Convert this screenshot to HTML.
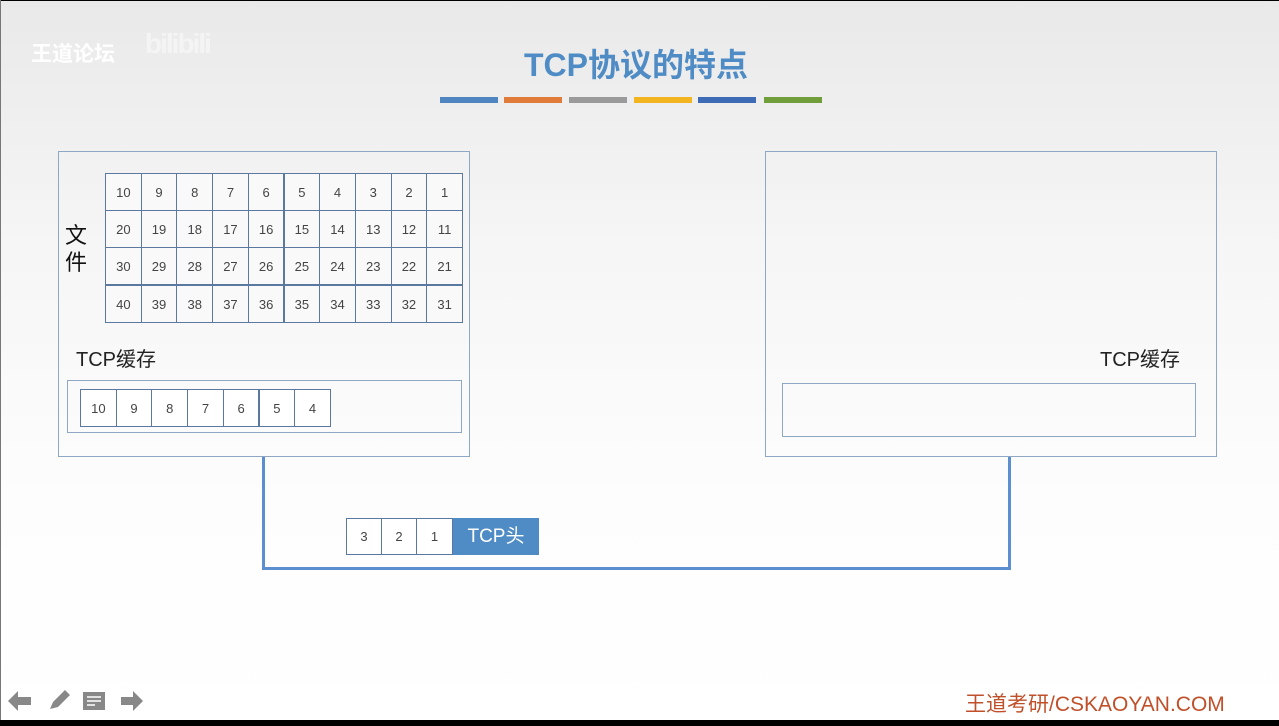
<html><head><style>
body{margin:0;width:1279px;height:726px;position:relative;overflow:hidden;background:linear-gradient(#e9e9e9,#f6f6f6 250px,#fdfdfd 500px,#fff);font-family:"Liberation Sans","Noto Sans CJK SC",sans-serif}
.a{position:absolute}
.c{position:absolute;border:1px solid #5a78a0;box-sizing:border-box;background:#f9f9f9;font-size:13px;color:#444;display:flex;align-items:center;justify-content:center}
.box{position:absolute;border:1px solid #8fa6c4;box-sizing:border-box}
.bar{position:absolute;top:97px;height:6px;width:58px}
</style></head><body>
<div class="a" style="left:0;top:0;width:1279px;height:1px;background:#000"></div>
<div class="a" style="left:0;top:0;width:1px;height:726px;background:#777"></div>
<div class="a" style="left:0;top:720px;width:1279px;height:6px;background:#000"></div>
<div class="a" style="left:31px;top:38px;font-size:21px;color:#fff;font-weight:bold">王道论坛</div>
<div class="a" style="left:145px;top:28px;font-size:28px;color:#f4f4f4;font-weight:bold;letter-spacing:-2px">bilibili</div>
<div class="a" style="left:0;width:1272px;top:40px;text-align:center;font-size:32px;font-weight:bold;color:#4f8cc6">TCP协议的特点</div>
<div class="bar" style="left:440px;background:#4f86c0"></div>
<div class="bar" style="left:504px;background:#e07b39"></div>
<div class="bar" style="left:569px;background:#9a9a9a"></div>
<div class="bar" style="left:634px;background:#f2b520"></div>
<div class="bar" style="left:698px;background:#3d6bb5"></div>
<div class="bar" style="left:764px;background:#6f9e3a"></div>
<div class="box" style="left:58px;top:151px;width:412px;height:306px"></div>
<div class="box" style="left:765px;top:151px;width:452px;height:306px"></div>
<div class="a" style="left:65px;top:222px;font-size:22px;line-height:27px;width:24px;color:#111">文件</div>
<div id="g"></div>
<div class="a" style="left:76px;top:343px;font-size:20px;color:#222">TCP缓存</div>
<div class="a" style="left:1100px;top:343px;font-size:20px;color:#222">TCP缓存</div>
<div class="box" style="left:67px;top:380px;width:395px;height:53px"></div>
<div class="box" style="left:782px;top:383px;width:414px;height:54px"></div>
<div class="a" style="left:262px;top:457px;width:3px;height:113px;background:#5b8fd0"></div>
<div class="a" style="left:1008px;top:457px;width:3px;height:113px;background:#5b8fd0"></div>
<div class="a" style="left:262px;top:567px;width:749px;height:3px;background:#5b8fd0"></div>
<div class="c" style="left:346px;top:518px;width:36px;height:37px;background:#fff">3</div>
<div class="c" style="left:381px;top:518px;width:36px;height:37px;background:#fff">2</div>
<div class="c" style="left:416px;top:518px;width:37px;height:37px;background:#fff">1</div>
<div class="a" style="left:453px;top:518px;width:86px;height:37px;background:#4f8cc6;color:#fff;font-size:19px;line-height:37px;text-align:center">TCP头</div>
<div class="a" style="left:965px;top:688px;font-size:21px;color:#c0502a">王道考研/CSKAOYAN.COM</div>
<svg class="a" style="left:6px;top:688px" width="140" height="26" viewBox="0 0 140 26">
<path d="M2 13L12 3V9H25V17H12V23Z" fill="#888"/>
<path d="M44 21L47 14L59 2L64 7L52 19Z M44 23L46 21" fill="#888"/>
<rect x="77" y="4" width="22" height="18" fill="#888"/><path d="M81 9H95M81 13H95M81 17H89" stroke="#fff" stroke-width="1.5"/>
<path d="M137 13L127 3V9H115V17H127V23Z" fill="#888"/>
</svg>
<script>
var g=document.getElementById('g'),h='';
var rx=[173,210,247,285],xs=105,w=35.7;
for(var r=0;r<4;r++)for(var i=0;i<10;i++){h+='<div class="c" style="left:'+(xs+i*w)+'px;top:'+rx[r]+'px;width:'+(w+1)+'px;height:38px">'+(r*10+10-i)+'</div>';}
var b=[10,9,8,7,6,5,4];
for(var i=0;i<7;i++)h+='<div class="c" style="left:'+(80+i*35.7)+'px;top:389px;width:36.7px;height:38px;background:#fff">'+b[i]+'</div>';
g.innerHTML=h;
</script>
</body></html>
